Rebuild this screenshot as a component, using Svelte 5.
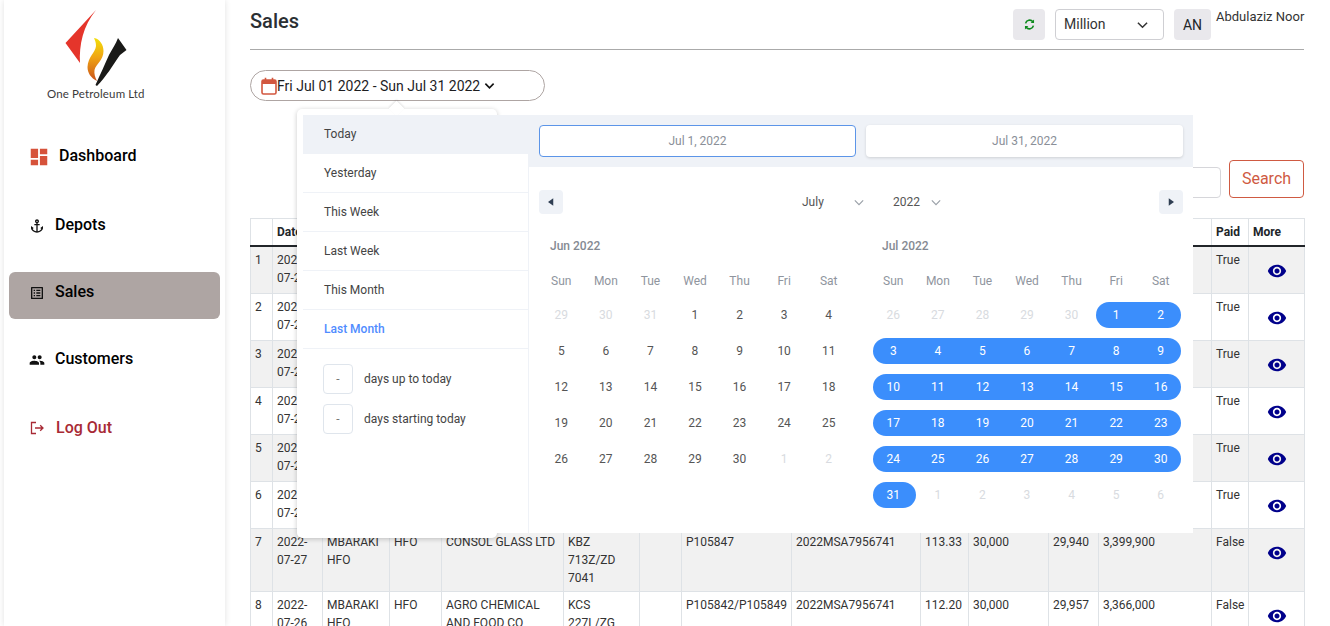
<script>
  const ranges = ['Today', 'Yesterday', 'This Week', 'Last Week', 'This Month', 'Last Month'];
  const weekdays = ['Sun', 'Mon', 'Tue', 'Wed', 'Thu', 'Fri', 'Sat'];

  const seq = (from, to, cls = '') => Array.from({ length: to - from + 1 }, (_, i) => ({ n: from + i, cls }));

  const june = [...seq(29, 31, 'off'), ...seq(1, 30), ...seq(1, 2, 'off')];

  const julyDays = seq(1, 31).map((d, i) => {
    const col = (i + 5) % 7;
    const start = col === 0 || d.n === 1;
    const end = col === 6 || d.n === 31;
    return { n: d.n, cls: `sel${start ? ' start' : ''}${end ? ' end' : ''}` };
  });
  const july = [...seq(26, 30, 'off'), ...julyDays, ...seq(1, 6, 'off')];

  const months = [
    { title: 'Jun 2022', days: june },
    { title: 'Jul 2022', days: july }
  ];

  const headers = ['', 'Date', '', '', '', '', '', '', '', '', '', '', '', 'Paid', 'More'];
  const widths = [22, 50, 67, 52, 122, 76, 42, 110, 129, 48, 80, 50, 113, 37, 56];

  const blank = ['', '', '', '', '', '', '', '', '', '', ''];
  const rows = [
    [1, '2022-07-29', ...blank, 'True'],
    [2, '2022-07-29', ...blank, 'True'],
    [3, '2022-07-28', ...blank, 'True'],
    [4, '2022-07-28', ...blank, 'True'],
    [5, '2022-07-28', ...blank, 'True'],
    [6, '2022-07-27', ...blank, 'True'],
    [7, '2022-07-27', 'MBARAKI HFO', 'HFO', 'CONSOL GLASS LTD', 'KBZ 713Z/ZD 7041', '', 'P105847', '2022MSA7956741', '113.33', '30,000', '29,940', '3,399,900', 'False'],
    [8, '2022-07-26', 'MBARAKI HFO', 'HFO', 'AGRO CHEMICAL AND FOOD CO', 'KCS 227L/ZG', '', 'P105842/P105849', '2022MSA7956741', '112.20', '30,000', '29,957', '3,366,000', 'False']
  ];
</script>

<div class="page">
  <aside class="sidebar">
    <div class="logo">
      <svg class="mark" viewBox="60 5 72 85" aria-hidden="true">
        <defs>
          <linearGradient id="flame" x1="0" y1="0" x2="0" y2="1">
            <stop offset="0" stop-color="#f2df0a" />
            <stop offset="0.45" stop-color="#f0a414" />
            <stop offset="1" stop-color="#c9521b" />
          </linearGradient>
        </defs>
        <path d="M96 10 L65.500 43 L80 63 C79 45 83 26 96 10 Z" fill="#e5352b" />
        <path d="M94 38 C100 39 103.500 45 103.500 51 C103.500 60 96 64 94.500 70 C94 74 95 77 97 81 C91 78 87.500 73 87.500 67 C88 57 95.500 52 96 46 C96 43 95.200 40.500 94 38 Z" fill="url(#flame)" />
        <path d="M118 38 L126.500 50 L120 55 C113 65 106 77 97 86 L95.500 85 C100 75 105 64 109 55 C112 49 116 44 118 38 Z" fill="#1a1a18" />
      </svg>
      <div class="logo-text">One Petroleum Ltd</div>
    </div>

    <nav class="menu">
      <a class="item dash">
        <svg class="ic-dash" viewBox="0 0 24 24" aria-hidden="true"><path d="M3 13h8V3H3v10zm0 8h8v-6H3v6zm10 0h8V11h-8v10zm0-18v6h8V3h-8z" /></svg>
        Dashboard
      </a>
      <a class="item">
        <svg viewBox="0 0 24 24" aria-hidden="true"><path d="M17 15l1.55 1.55c-.96 1.69-3.33 3.04-5.55 3.37V11h3V9h-3V7.82C14.16 7.4 15 6.3 15 5c0-1.65-1.35-3-3-3S9 3.35 9 5c0 1.3.84 2.4 2 2.82V9H8v2h3v8.92c-2.22-.33-4.59-1.68-5.55-3.37L7 15l-4-3v3c0 3.88 4.92 7 9 7s9-3.12 9-7v-3l-4 3zM12 4c.55 0 1 .45 1 1s-.45 1-1 1-1-.45-1-1 .45-1 1-1z" /></svg>
        Depots
      </a>
      <a class="item active">
        <svg viewBox="0 0 24 24" aria-hidden="true"><path d="M19 5v14H5V5h14m1.1-2H3.9c-.5 0-.9.4-.9.9v16.2c0 .4.4.9.9.9h16.2c.4 0 .9-.5.9-.9V3.9c0-.5-.5-.9-.9-.9zM11 7h6v2h-6V7zm0 4h6v2h-6v-2zm0 4h6v2h-6zM7 7h2v2H7zm0 4h2v2H7zm0 4h2v2H7z" /></svg>
        Sales
      </a>
      <a class="item cust">
        <svg viewBox="0 0 24 24" aria-hidden="true"><path d="M16 11c1.66 0 2.99-1.34 2.99-3S17.66 5 16 5c-1.66 0-3 1.34-3 3s1.34 3 3 3zm-8 0c1.66 0 2.99-1.34 2.99-3S9.66 5 8 5C6.34 5 5 6.34 5 8s1.34 3 3 3zm0 2c-2.33 0-7 1.17-7 3.5V19h14v-2.5c0-2.33-4.67-3.5-7-3.5zm8 0c-.29 0-.62.02-.97.05 1.16.84 1.97 1.97 1.97 3.45V19h6v-2.5c0-2.33-4.67-3.5-7-3.5z" /></svg>
        Customers
      </a>
      <a class="item logout">
        <svg class="ic-out" viewBox="0 0 16 16" aria-hidden="true"><path d="M7 2.500H2.500v11H7M6 8h8M11.200 5.200 14 8l-2.800 2.800" /></svg>
        Log Out
      </a>
    </nav>
  </aside>

  <main class="main">
    <header class="top">
      <h1>Sales</h1>
      <div class="tools">
        <button class="chip refresh" aria-label="Refresh">
          <svg viewBox="0 0 16 16" aria-hidden="true"><path d="M3.200 6.600A5 5 0 0 1 12.100 4.600M12.800 9.400A5 5 0 0 1 3.900 11.400" /><path class="fill" d="M13.600 1.900v4.200H9.400zM2.400 14.100V9.900h4.200z" /></svg>
        </button>
        <div class="select">
          Million
          <svg class="chev" viewBox="0 0 12 8" aria-hidden="true"><path d="M1 1.500 6 6.500 11 1.500" /></svg>
        </div>
        <div class="chip avatar">AN</div>
        <div class="user">Abdulaziz Noor</div>
      </div>
    </header>

    <div class="date-wrap">
      <div class="date-pill">
        <svg class="cal" viewBox="0 0 16 18" aria-hidden="true"><rect x="1" y="3" width="14" height="14" rx="1.5" /><rect class="cal-head" x="1" y="3" width="14" height="4" /><path d="M4.500 0.800v3M11.500 0.800v3" /></svg>
        <span>Fri Jul 01 2022 - Sun Jul 31 2022</span>
        <svg class="chev small" viewBox="0 0 12 8" aria-hidden="true"><path d="M1.500 1.500 6 6 10.500 1.500" /></svg>
      </div>

      <div class="pop">
        <div class="drp">
          <div class="presets">
            {#each ranges as r, i}
              <div class="preset" class:hover={i === 0} class:current={r === 'Last Month'}>{r}</div>
            {/each}
            <div class="inputs">
              <div class="days"><span class="box">-</span><span>days up to today</span></div>
              <div class="days"><span class="box">-</span><span>days starting today</span></div>
            </div>
          </div>

          <div class="pane">
            <div class="fields">
              <div class="field focus">Jul 1, 2022</div>
              <div class="field">Jul 31, 2022</div>
            </div>
            <div class="nav">
              <button class="arrow" aria-label="Previous"><svg viewBox="0 0 8 10" aria-hidden="true"><path d="M7 0v10L0 5z" /></svg></button>
              <div class="pick month">July<svg class="chev grey" viewBox="0 0 12 8" aria-hidden="true"><path d="M1 1.500 6 6.500 11 1.500" /></svg></div>
              <div class="pick year">2022<svg class="chev grey" viewBox="0 0 12 8" aria-hidden="true"><path d="M1 1.500 6 6.500 11 1.500" /></svg></div>
              <button class="arrow next" aria-label="Next"><svg viewBox="0 0 8 10" aria-hidden="true"><path d="M1 0v10l7-5z" /></svg></button>
            </div>
            <div class="months">
              {#each months as m}
                <div class="month-col">
                  <div class="m-title">{m.title}</div>
                  <div class="grid weeks">
                    {#each weekdays as w}<div>{w}</div>{/each}
                  </div>
                  <div class="grid cells">
                    {#each m.days as d}<div class="cell {d.cls}">{d.n}</div>{/each}
                  </div>
                </div>
              {/each}
            </div>
          </div>
        </div>
      </div>
    </div>

    <div class="filters">
      <div class="search-input"></div>
      <button class="search">Search</button>
    </div>

    <table>
      <colgroup>
        {#each widths as w}<col style="width:{w}px" />{/each}
      </colgroup>
      <thead>
        <tr>{#each headers as h}<th>{h}</th>{/each}</tr>
      </thead>
      <tbody>
        {#each rows as row}
          <tr>
            {#each row as c}<td>{c}</td>{/each}
            <td class="more">
              <span class="eye">
                <svg viewBox="0 0 24 24" aria-hidden="true"><path d="M12 4.500C7 4.500 2.730 7.610 1 12c1.730 4.390 6 7.500 11 7.500s9.270-3.110 11-7.500c-1.730-4.390-6-7.500-11-7.500zM12 17c-2.760 0-5-2.240-5-5s2.240-5 5-5 5 2.240 5 5-2.240 5-5 5zm0-8c-1.660 0-3 1.340-3 3s1.340 3 3 3 3-1.340 3-3-1.340-3-3-3z" /></svg>
              </span>
            </td>
          </tr>
        {/each}
      </tbody>
    </table>
  </main>
</div>

<style>
  :global(body) {
    margin: 0;
    background: #fff;
    font-family: Roboto, "Liberation Sans", sans-serif;
    color: #212529;
  }

  .page {
    display: flex;
    height: 626px;
    overflow: hidden;
  }

  /* Sidebar */
  .sidebar {
    flex: none;
    width: 221px;
    margin-left: 4px;
    background: #fff;
    box-shadow: 0 0 6px rgba(0, 0, 0, 0.12);
  }

  .logo {
    height: 136px;
    box-sizing: border-box;
    padding-top: 5px;
  }

  .mark {
    display: block;
    width: 72px;
    height: 85px;
    margin-left: 56px;
  }

  .logo-text {
    margin: -3px 0 0 43px;
    font-family: Lato, sans-serif;
    font-size: 11.5px;
    line-height: 14px;
    letter-spacing: 0.14px;
    color: #3a3a3a;
    white-space: nowrap;
  }

  .menu {
    display: flex;
    flex-direction: column;
    padding: 0 5px;
  }

  .item {
    display: flex;
    align-items: flex-start;
    gap: 10px;
    height: 47px;
    box-sizing: border-box;
    margin-bottom: 20px;
    padding: 10px 0 0 20px;
    border-radius: 6px;
    font-size: 16px;
    font-weight: 500;
    line-height: 20px;
    color: #000;
  }

  .item svg {
    flex: none;
    width: 16px;
    height: 16px;
    margin-top: 3px;
    fill: #111;
  }

  .dash {
    margin-bottom: 22px;
    padding-left: 19px;
    gap: 9px;
  }

  .item .ic-dash {
    width: 22px;
    height: 22px;
    margin-top: 0;
    fill: #d6523a;
  }

  .cust {
    margin-bottom: 22px;
  }

  .active {
    background: #aea5a3;
  }

  .logout {
    color: #a82a35;
    gap: 11px;
  }

  .item .ic-out {
    margin-top: 2px;
    fill: none;
    stroke: #a82a35;
    stroke-width: 1.3;
  }

  /* Main */
  .main {
    flex: none;
    width: 1054px;
    margin-left: 25px;
  }

  .top {
    display: flex;
    justify-content: space-between;
    height: 49px;
    box-sizing: border-box;
    padding-top: 9px;
    box-shadow: 0 1px 0 #aaa;
  }

  h1 {
    margin: 0;
    font-size: 20px;
    font-weight: 500;
    line-height: 24px;
    color: #2b2f33;
  }

  .tools {
    display: flex;
    align-items: flex-start;
    gap: 10px;
  }

  .chip {
    display: flex;
    align-items: center;
    justify-content: center;
    height: 31px;
    box-sizing: border-box;
    padding: 0;
    border: 0;
    border-radius: 4px;
    background: #e9e8ec;
    font-family: inherit;
    font-size: 14px;
    color: #212529;
  }

  .refresh {
    width: 32px;
  }

  .refresh svg {
    width: 13px;
    height: 13px;
    fill: none;
    stroke: #0c8a1c;
    stroke-width: 2;
  }

  .refresh .fill {
    fill: #0c8a1c;
    stroke: none;
  }

  .select {
    display: flex;
    align-items: center;
    justify-content: space-between;
    width: 109px;
    height: 31px;
    box-sizing: border-box;
    padding: 0 15px 2px 8px;
    border: 1px solid #cfcfd3;
    border-radius: 4px;
    font-size: 14px;
    color: #333;
  }

  .select .chev {
    margin-top: 2px;
  }

  .chev {
    width: 11px;
    height: 8px;
    fill: none;
    stroke: #333;
    stroke-width: 1.6;
  }

  .avatar {
    width: 37px;
  }

  .user {
    width: 88px;
    margin-left: -5px;
    font-size: 13px;
    line-height: 16px;
    color: #333;
    white-space: nowrap;
  }

  /* Date picker */
  .date-wrap {
    position: relative;
    margin-top: 21px;
  }

  .date-pill {
    display: flex;
    align-items: center;
    width: 295px;
    height: 31px;
    box-sizing: border-box;
    padding-left: 10px;
    border: 1px solid #aea5a3;
    border-radius: 16px;
    font-size: 14px;
    color: #1d1d1f;
  }

  .cal {
    flex: none;
    width: 16px;
    height: 18px;
    fill: none;
    stroke: #d2573f;
    stroke-width: 1.6;
  }

  .cal-head {
    fill: #d2573f;
    stroke: none;
  }

  .chev.small {
    margin-left: 4px;
    width: 11px;
    stroke: #111;
    stroke-width: 1.8;
  }

  .pop {
    position: absolute;
    left: 47px;
    top: 39px;
    z-index: 5;
    width: 200px;
    height: 429px;
    border-radius: 5px;
    background: #fff;
    box-shadow: 0 1px 5px rgba(0, 0, 0, 0.22);
  }

  .pop::before {
    content: "";
    position: absolute;
    left: 94px;
    top: -6px;
    width: 11px;
    height: 11px;
    background: #fff;
    transform: rotate(45deg);
    box-shadow: -1px -1px 2px rgba(0, 0, 0, 0.1);
  }

  .drp {
    position: absolute;
    left: 6px;
    top: 6px;
    display: flex;
    width: 890px;
    height: 418px;
    background: #fff;
  }

  .presets {
    flex: none;
    width: 226px;
    box-sizing: border-box;
    border-right: 1px solid #eff2f7;
    font-size: 12px;
    color: #444;
  }

  .preset {
    height: 39px;
    box-sizing: border-box;
    padding: 12px 0 0 21px;
    line-height: 15px;
    border-bottom: 1px solid #eff2f7;
  }

  .preset.hover {
    background: #eff2f7;
  }

  .preset.current {
    font-weight: 500;
    color: #4f8cff;
  }

  .inputs {
    display: flex;
    flex-direction: column;
    gap: 10px;
    padding: 15px 0 0 20px;
  }

  .days {
    display: flex;
    align-items: center;
    gap: 11px;
  }

  .box {
    display: flex;
    align-items: center;
    justify-content: center;
    width: 30px;
    height: 30px;
    box-sizing: border-box;
    border: 1px solid #dfe5ec;
    border-radius: 4px;
    color: #777;
  }

  .pane {
    flex: 1;
    min-width: 0;
    font-size: 12px;
  }

  .fields {
    display: flex;
    gap: 10px;
    height: 52px;
    box-sizing: border-box;
    padding: 10px;
    background: #eff2f7;
  }

  .field {
    flex: 1;
    height: 32px;
    box-sizing: border-box;
    border: 1px solid transparent;
    border-radius: 4px;
    background: #fff;
    box-shadow: 0 1px 3px rgba(0, 0, 0, 0.14);
    line-height: 30px;
    text-align: center;
    color: #8a8f98;
  }

  .field.focus {
    border-color: #5c95e8;
    box-shadow: none;
  }

  .nav {
    display: flex;
    align-items: center;
    height: 24px;
    margin: 23px 10px 0;
  }

  .arrow {
    display: flex;
    align-items: center;
    justify-content: center;
    width: 24px;
    height: 24px;
    padding: 0;
    border: 0;
    border-radius: 4px;
    background: #eff2f7;
  }

  .arrow svg {
    width: 6px;
    height: 8px;
    fill: #2f3e52;
  }

  .arrow.next {
    margin-left: auto;
  }

  .pick {
    display: flex;
    align-items: center;
    justify-content: space-between;
    box-sizing: border-box;
    padding-right: 2px;
    color: #555;
  }

  .month {
    width: 64px;
    margin-left: 239px;
  }

  .year {
    width: 50px;
    margin-left: 27px;
  }

  .chev.grey {
    width: 10px;
    height: 7px;
    stroke: #9aa0a8;
    stroke-width: 1.4;
  }

  .months {
    display: flex;
    gap: 20px;
    padding: 0 10px;
  }

  .month-col {
    width: 312px;
  }

  .m-title {
    margin-top: 23px;
    padding-left: 11px;
    font-weight: 500;
    line-height: 18px;
    color: #858a92;
  }

  .grid {
    display: grid;
    grid-template-columns: repeat(7, 1fr);
    text-align: center;
  }

  .weeks {
    margin-top: 17px;
    line-height: 18px;
    color: #8f959e;
  }

  .cells {
    margin-top: 12px;
    row-gap: 10px;
    line-height: 26px;
    color: #555;
  }

  .cell {
    height: 26px;
  }

  .cell.off {
    color: #d8dbe0;
  }

  .cell.sel {
    background: #3b8efc;
    color: #fff;
  }

  .cell.start {
    margin-left: 2px;
    padding-right: 2px;
    border-radius: 13px 0 0 13px;
  }

  .cell.end {
    margin-right: 2px;
    padding-left: 2px;
    border-radius: 0 13px 13px 0;
  }

  .cell.start.end {
    margin-right: 0;
    padding: 0 2px 0 0;
    border-radius: 13px;
  }

  /* Filters */
  .filters {
    display: flex;
    justify-content: flex-end;
    align-items: flex-end;
    gap: 8px;
    margin-top: 59px;
  }

  .search-input {
    width: 300px;
    height: 31px;
    box-sizing: border-box;
    border: 1px solid #d6d6da;
    border-radius: 4px;
  }

  .search {
    width: 75px;
    height: 38px;
    padding: 0 0 2px;
    border: 1px solid #cf5a42;
    border-radius: 4px;
    background: #fff;
    font-family: inherit;
    font-size: 16px;
    color: #cf5a42;
  }

  /* Table */
  table {
    width: 1054px;
    margin-top: 20px;
    table-layout: fixed;
    border-collapse: collapse;
    font-size: 12px;
    line-height: 18px;
    color: #333;
  }

  th,
  td {
    box-sizing: border-box;
    padding: 4px;
    border: 1px solid #dee2e6;
    vertical-align: top;
    text-align: left;
  }

  th {
    height: 27px;
    font-weight: 700;
    color: #212529;
    border-bottom: 2px solid #212529;
  }

  tbody tr:nth-child(odd) {
    background: #f1f1f1;
  }

  .more {
    padding-left: 0;
    padding-right: 0;
    text-align: center;
  }

  .eye {
    display: flex;
    align-items: center;
    justify-content: center;
    height: 38px;
    padding-top: 1px;
    box-sizing: border-box;
  }

  .eye svg {
    width: 20px;
    height: 20px;
    fill: #00008b;
  }
</style>
